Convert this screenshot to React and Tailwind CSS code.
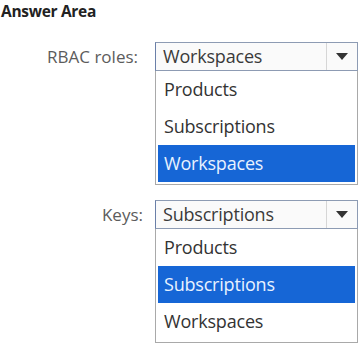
import React from "react";

function Dropdown({ value, options, selected }) {
  return (
    <div className="w-[203px] flex flex-col">
      <div className="h-[29px] flex border border-[#8d9bb3] border-l-[#6a7fa8] bg-[#fafafa]">
        <div className="flex-1 flex items-center pl-[7px] text-[18px] tracking-[-0.2px] text-[#3a3a3a]">{value}</div>
        <div className="w-[31px] flex items-center justify-center border-l border-[#d6d6d6]">
          <svg width="12" height="7" viewBox="0 0 12 7">
            <path d="M0 0h12L6 7z" fill="#333" />
          </svg>
        </div>
      </div>
      <div className="flex flex-col border border-t-0 border-[#a9a9a9] bg-white px-[2px] pb-[2px]">
        {options.map((o) => (
          <div
            key={o}
            className={
              "h-[37px] flex items-center pl-[6px] text-[18px] tracking-[-0.2px] " +
              (o === selected ? "bg-[#1666d6] text-[#e8f2ff]" : "text-[#333]")
            }
          >
            {o}
          </div>
        ))}
      </div>
    </div>
  );
}

export default function App() {
  const opts = ["Products", "Subscriptions", "Workspaces"];
  return (
    <div className="w-[363px] h-[344px] bg-white overflow-hidden font-['Open_Sans',sans-serif]">
      <div className="pl-[1px] pt-[1px] text-[15.5px] font-bold text-[#222] leading-[20px] tracking-[-0.3px]">Answer Area</div>
      <div className="flex flex-col gap-[15px] mt-[21px]">
        <div className="flex">
          <div className="w-[155px] h-[29px] flex items-center justify-end pr-[17px] text-[17px] text-[#5c5c5c]">RBAC roles:</div>
          <Dropdown value="Workspaces" options={opts} selected="Workspaces" />
        </div>
        <div className="flex">
          <div className="w-[155px] h-[29px] flex items-center justify-end pr-[12px] text-[17px] text-[#5c5c5c]">Keys:</div>
          <Dropdown value="Subscriptions" options={opts} selected="Subscriptions" />
        </div>
      </div>
    </div>
  );
}
